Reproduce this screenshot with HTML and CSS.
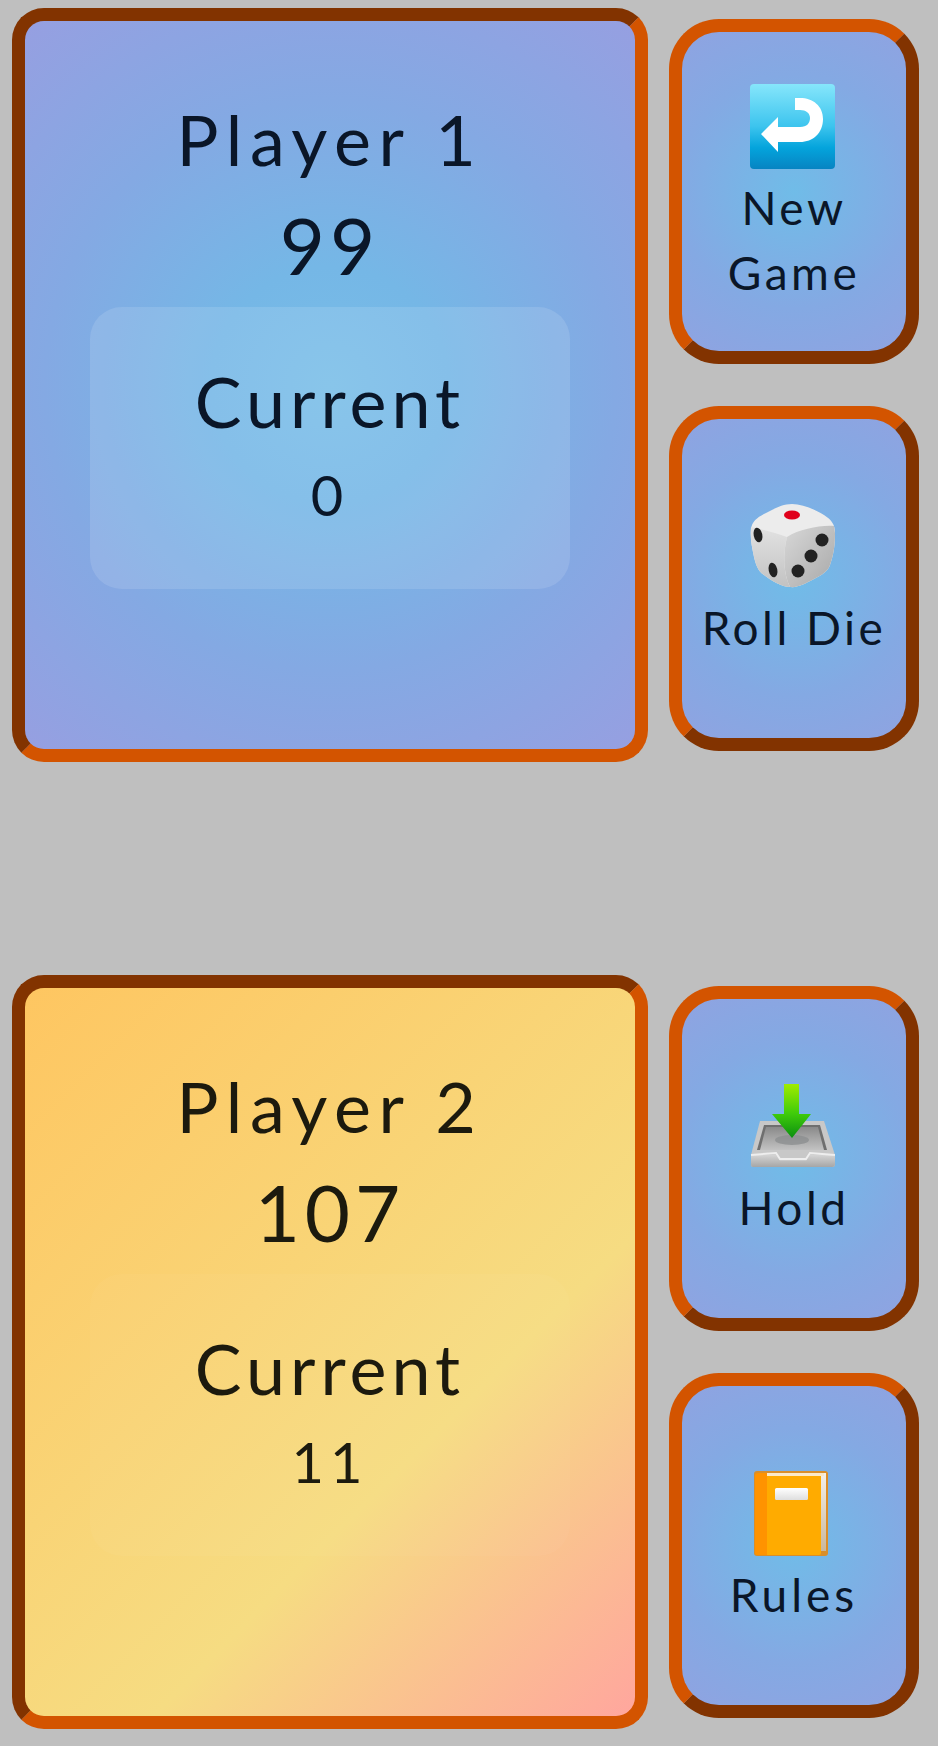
FILE: index.html
```html
<!DOCTYPE html>
<html lang="en">
<head>
    <meta charset="UTF-8">
    <meta name="viewport" content="width=device-width, initial-scale=1.0">
    <title>Pig Game</title>
    <link rel="stylesheet" href="styles.css">
</head>
<body>
    <svg class="defs" width="0" height="0">
        <defs>
            <linearGradient id="return-bg" x1="0" y1="0" x2="0" y2="1">
                <stop offset="0" stop-color="#86e6fb"/>
                <stop offset="0.5" stop-color="#3cc4ee"/>
                <stop offset="0.75" stop-color="#04a4dc"/>
                <stop offset="1" stop-color="#0784c2"/>
            </linearGradient>
            <linearGradient id="die-right" x1="0" y1="0" x2="1" y2="1">
                <stop offset="0" stop-color="#d8d8d8"/>
                <stop offset="1" stop-color="#a8a8a8"/>
            </linearGradient>
            <linearGradient id="die-left" x1="0" y1="0" x2="0" y2="1">
                <stop offset="0" stop-color="#e2e2e2"/>
                <stop offset="1" stop-color="#c2c2c2"/>
            </linearGradient>
            <linearGradient id="arrow-green" x1="0" y1="0" x2="0" y2="1">
                <stop offset="0" stop-color="#a0ec00"/>
                <stop offset="0.55" stop-color="#3fcb0a"/>
                <stop offset="1" stop-color="#0b8f10"/>
            </linearGradient>
            <linearGradient id="tray-front" x1="0" y1="0" x2="0" y2="1">
                <stop offset="0" stop-color="#d4d4d4"/>
                <stop offset="1" stop-color="#a6a6a6"/>
            </linearGradient>
            <linearGradient id="tray-well" x1="0" y1="0" x2="0" y2="1">
                <stop offset="0" stop-color="#8a8a8a"/>
                <stop offset="1" stop-color="#c2c2c2"/>
            </linearGradient>
            <linearGradient id="book-label" x1="0" y1="0" x2="0" y2="1">
                <stop offset="0" stop-color="#ffffff"/>
                <stop offset="1" stop-color="#dedede"/>
            </linearGradient>
            <linearGradient id="book-pages" x1="0" y1="0" x2="0" y2="1">
                <stop offset="0" stop-color="#f4f0ea"/>
                <stop offset="1" stop-color="#c9b79c"/>
            </linearGradient>
        </defs>
    </svg>

    <main class="game">
        <section class="row">
            <div class="player player-one">
                <h2 class="player-name">Player 1</h2>
                <p class="player-score">99</p>
                <div class="current current-active">
                    <h3 class="current-label">Current</h3>
                    <p class="current-score">0</p>
                </div>
            </div>
            <div class="controls">
                <button class="btn">
                    <svg class="btn-icon" viewBox="0 0 85 85">
                        <rect x="0" y="0" width="85" height="85" rx="4" fill="url(#return-bg)"/>
                        <path d="M11 50 L28 33 V43 H50 C57 43 60 39 60 34 C60 29 56 26 50 26 H45 V14 H50 C63 14 73 22 73 35 C73 49 63 58 50 58 H28 V68 Z" fill="#fff"/>
                    </svg>
                    <span class="btn-label">New<br>Game</span>
                </button>
                <button class="btn">
                    <svg class="btn-icon" viewBox="0 1 85 85">
                        <path d="M42 1 C52 1 64 6 74 12 C82 17 85 22 85 30 C85 42 84 50 80 62 C78 68 72 72 64 76 C56 80 48 85 40 84 C32 84 22 78 14 72 C8 68 6 62 4 54 C2 44 0 36 1 26 C2 18 8 14 16 10 C24 6 32 1 42 1 Z" fill="#ececec"/>
                        <path d="M1 24 C12 26 26 30 37 34 C33 50 33 70 40 84 C32 84 22 78 14 72 C8 68 6 62 4 54 C2 44 0 36 1 24 Z" fill="url(#die-left)"/>
                        <path d="M85 30 C85 42 84 50 80 62 C78 68 72 72 64 76 C56 80 48 85 40 84 C33 70 33 50 37 34 C50 26 70 22 84 23 Z" fill="url(#die-right)"/>
                        <ellipse cx="42" cy="12" rx="8" ry="4.5" fill="#e0001b"/>
                        <ellipse cx="8" cy="32" rx="4.3" ry="7.3" transform="rotate(-12 8 32)" fill="#222"/>
                        <ellipse cx="23" cy="67" rx="4.3" ry="7.3" transform="rotate(-12 23 67)" fill="#222"/>
                        <circle cx="72" cy="37" r="6.5" fill="#222"/>
                        <circle cx="61" cy="53" r="6.5" fill="#222"/>
                        <circle cx="48" cy="68" r="6.5" fill="#222"/>
                    </svg>
                    <span class="btn-label">Roll Die</span>
                </button>
            </div>
        </section>

        <section class="row">
            <div class="player player-two">
                <h2 class="player-name">Player 2</h2>
                <p class="player-score">107</p>
                <div class="current">
                    <h3 class="current-label">Current</h3>
                    <p class="current-score">11</p>
                </div>
            </div>
            <div class="controls">
                <button class="btn">
                    <svg class="btn-icon" viewBox="0 0 85 85">
                        <path d="M10 37 H74 L85 71 V80 Q85 83 82 83 H3 Q1 83 1 80 V71 Z" fill="#c8c8c8"/>
                        <path d="M14 41 H70 L77 66 H7 Z" fill="#6f6f6f"/>
                        <path d="M16 43 H68 L74 66 H10 Z" fill="url(#tray-well)"/>
                        <path d="M1 71 H26 L30 77 H56 L60 71 H85 V80 Q85 83 82 83 H3 Q1 83 1 80 Z" fill="url(#tray-front)"/>
                        <path d="M1 71 L26 69 L30 75 H56 L60 69 L85 71" fill="none" stroke="#eeeeee" stroke-width="2"/>
                        <ellipse cx="42" cy="56" rx="17" ry="5" fill="#8c8f90" opacity="0.8"/>
                        <path d="M34 0 H49 V30 H61 L42 54 L22 30 H34 Z" fill="url(#arrow-green)"/>
                    </svg>
                    <span class="btn-label">Hold</span>
                </button>
                <button class="btn">
                    <svg class="btn-icon" viewBox="0 0 85 85">
                        <rect x="4" y="0" width="74" height="85" rx="3" fill="#d98e2a"/>
                        <rect x="71" y="2" width="5" height="78" fill="url(#book-pages)"/>
                        <rect x="14" y="2" width="60" height="3" fill="#fbe9c8"/>
                        <path d="M5 4 Q5 2 9 2 H17 V84 H7 Q5 84 5 82 Z" fill="#ff9300"/>
                        <path d="M17 5 H71 V82 Q71 84 69 84 H17 Z" fill="#ffab00"/>
                        <rect x="25" y="17" width="33" height="12" rx="1.5" fill="url(#book-label)"/>
                    </svg>
                    <span class="btn-label btn-label-wide">Rules</span>
                </button>
            </div>
        </section>
    </main>
</body>
</html>
```

FILE: styles.css
```css
* {
    box-sizing: border-box;
}

body {
    margin: 0;
    background-color: #bfbfbf;
    font-family: 'Lato', 'Noto Sans', sans-serif;
}

.defs {
    position: absolute;
}

.game {
    display: flex;
    flex-direction: column;
    gap: 213px;
    padding: 8px 19px 17px 12px;
}

.row {
    display: flex;
    justify-content: space-between;
    align-items: center;
}

.player {
    width: 636px;
    height: 754px;
    padding-top: 68px;
    border: 13px solid;
    border-color: #823300 #d35400 #d35400 #823300;
    border-radius: 32px;
    text-align: center;
}

.player-one {
    color: #0a1628;
    background: radial-gradient(circle, #78bde8 0%, #75b7e6 25%, #84a9e3 60%, #969fe1 100%);
}

.player-two {
    color: #1c1a0e;
    background: linear-gradient(135deg, #fec661 0%, #f6dc82 64%, #ffa69e 100%);
}

.player-name {
    margin: 0;
    font-size: 70px;
    font-weight: 400;
    line-height: 100px;
    letter-spacing: 7.5px;
}

.player-score {
    margin: 0;
    font-size: 78px;
    line-height: 112px;
    letter-spacing: 5px;
}

.current {
    width: 480px;
    height: 282px;
    margin: 6px auto 0;
    padding-top: 44px;
    border-radius: 32px;
    background-color: rgba(255, 255, 255, 0.03);
}

.current-active {
    background-color: rgba(255, 255, 255, 0.12);
}

.current-label {
    margin: 0;
    font-size: 70px;
    font-weight: 400;
    line-height: 100px;
    letter-spacing: 5px;
}

.current-score {
    margin: 0;
    font-size: 56px;
    line-height: 88px;
    letter-spacing: 6px;
}

.controls {
    display: flex;
    flex-direction: column;
    gap: 42px;
}

.btn {
    display: flex;
    flex-direction: column;
    align-items: center;
    justify-content: center;
    width: 250px;
    height: 345px;
    padding: 6px 0 0;
    border: 13px solid;
    border-color: #d35400 #823300 #823300 #d35400;
    border-radius: 50px;
    background: radial-gradient(circle, #70bce8 0%, #84a9e3 60%, #8fa3e1 100%);
    color: #0a1628;
    font-family: inherit;
}

.btn-icon {
    display: block;
    width: 85px;
    height: 85px;
    margin: 0 4px 6px 0;
}

.btn-label {
    font-size: 46px;
    line-height: 65px;
    letter-spacing: 3.5px;
}

.btn-label-wide {
    letter-spacing: 4px;
}
```
